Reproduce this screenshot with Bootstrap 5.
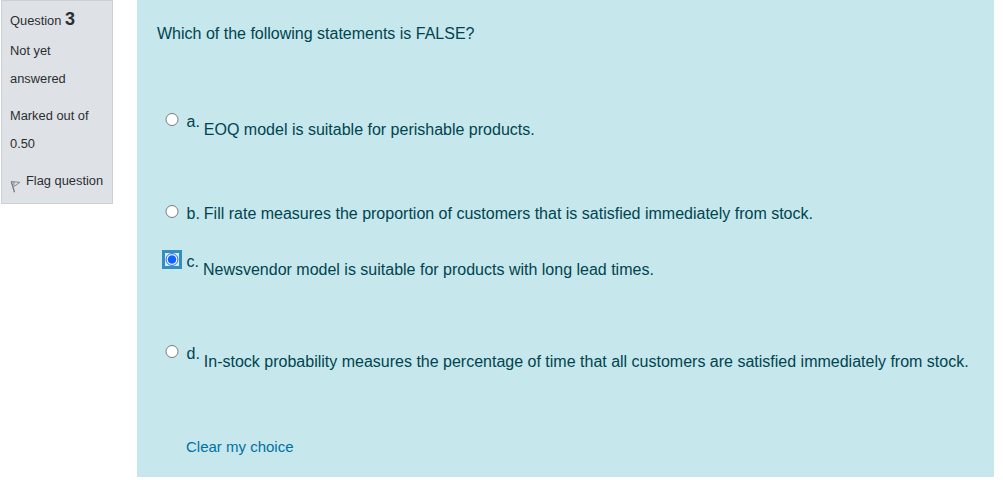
<!DOCTYPE html>
<html lang="en">
<head>
    <meta charset="UTF-8">
    <meta name="viewport" content="width=device-width, initial-scale=1.0">
    <title>Quiz - Question 3</title>
    <link href="https://cdn.jsdelivr.net/npm/bootstrap@5.3.0/dist/css/bootstrap.min.css" rel="stylesheet">
    <style>
        body {
            font-family: "Liberation Sans", Arial, sans-serif;
            font-size: 16px;
            line-height: 24px;
            overflow: hidden;
        }
        .question-info {
            width: 112px;
            height: 204px;
            margin-left: 1px;
            padding: 5px 8px 0;
            background: #dee2e6;
            border: 1px solid #cad0d7;
            color: #2b2e31;
            font-size: 12.85px;
            line-height: 28px;
        }
        .question-info .number {
            font-size: 18px;
            line-height: 26px;
        }
        .state {
            margin-top: 2px;
        }
        .grade, .flag {
            margin-top: 9px;
        }
        .flag svg {
            margin: 13px 5px 0 0;
        }
        .formulation {
            width: 857px;
            height: 477px;
            margin-left: 24px;
            padding: 22px 20px 0;
            background: #c6e7eb;
            color: #004450;
        }
        .answers {
            padding: 64px 0 0 5px;
        }
        .answer {
            height: 92px;
        }
        .answer.short {
            height: 48px;
        }
        .choice {
            width: 20px;
            height: 19px;
        }
        .choice.focused {
            background: #338fbd;
        }
        .choice.focused > span {
            background: #d5edf7;
        }
        .letter {
            margin-left: 4.5px;
        }
        .statement {
            margin: 8px 0 0 4px;
        }
        .short .statement {
            margin-top: 0;
        }
        .clear-choice {
            margin: 1px 0 0 24px;
            color: #0070a8;
            font-size: 15px;
        }
    </style>
    <script src="https://cdn.jsdelivr.net/npm/bootstrap@5.3.0/dist/js/bootstrap.bundle.min.js"></script>
</head>
<body>
<div class="d-flex align-items-start">

    <!-- Question info -->
    <div class="question-info flex-shrink-0">
        <div>Question <span class="number fw-bold">3</span></div>
        <div class="state">Not yet<br>answered</div>
        <div class="grade">Marked out of<br>0.50</div>
        <div class="flag d-flex text-nowrap">
            <svg class="flex-shrink-0" width="11" height="13" viewBox="0 0 11 13" fill="none" stroke="#777b7e">
                <path d="M1.3 1.5L4.5 12.3" stroke-width="1.3"/>
                <path d="M1.3 1.5L9.8 2.4L3.6 6.8M3.9 2V5.5" stroke-width="0.9"/>
            </svg>
            <span>Flag question</span>
        </div>
    </div>

    <!-- Question text and answers -->
    <div class="formulation flex-shrink-0">
        <div class="qtext">Which of the following statements is FALSE?</div>
        <div class="answers text-nowrap">
            <div class="answer d-flex align-items-start">
                <span class="choice d-flex align-items-center justify-content-center">
                    <svg width="14" height="13" viewBox="0 0 14 13"><circle cx="7" cy="6.5" r="6" fill="#fff" stroke="#777b7c"/></svg>
                </span>
                <span class="letter">a.</span>
                <span class="statement">EOQ model is suitable for perishable products.</span>
            </div>
            <div class="answer short d-flex align-items-start">
                <span class="choice d-flex align-items-center justify-content-center">
                    <svg width="14" height="13" viewBox="0 0 14 13"><circle cx="7" cy="6.5" r="6" fill="#fff" stroke="#777b7c"/></svg>
                </span>
                <span class="letter">b.</span>
                <span class="statement">Fill rate measures the proportion of customers that is satisfied immediately from stock.</span>
            </div>
            <div class="answer d-flex align-items-start">
                <span class="choice focused d-flex align-items-center justify-content-center">
                    <span class="d-flex">
                        <svg width="14" height="13" viewBox="0 0 14 13"><circle cx="7" cy="6.5" r="5.9" fill="#fff" stroke="#1a66ff"/><circle cx="7" cy="6.5" r="4.3" fill="#1062fe"/></svg>
                    </span>
                </span>
                <span class="letter">c.</span>
                <span class="statement">Newsvendor model is suitable for products with long lead times.</span>
            </div>
            <div class="answer d-flex align-items-start">
                <span class="choice d-flex align-items-center justify-content-center">
                    <svg width="14" height="13" viewBox="0 0 14 13"><circle cx="7" cy="6.5" r="6" fill="#fff" stroke="#777b7c"/></svg>
                </span>
                <span class="letter">d.</span>
                <span class="statement">In-stock probability measures the percentage of time that all customers are satisfied immediately from stock.</span>
            </div>
            <a href="#" class="clear-choice d-inline-block text-decoration-none">Clear my choice</a>
        </div>
    </div>
</div>
</body>
</html>
